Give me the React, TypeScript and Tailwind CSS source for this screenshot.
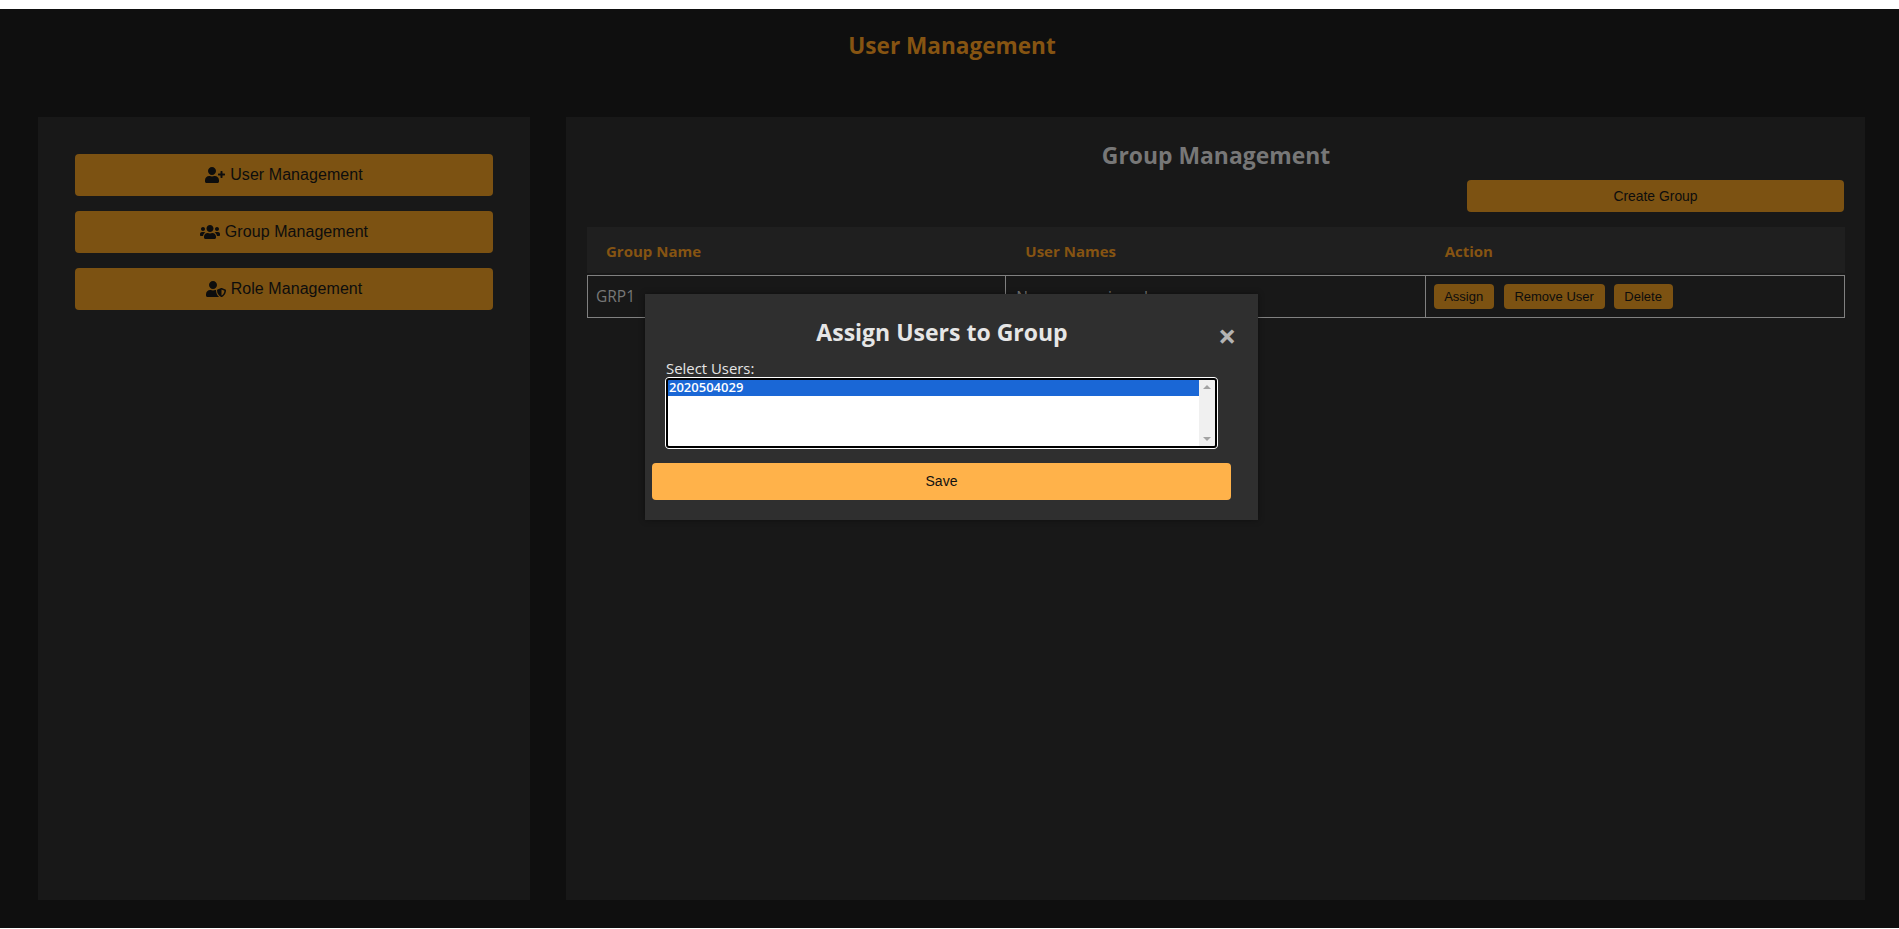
import React from 'react';
import { FaUserPlus, FaUsers, FaUserShield } from 'react-icons/fa';

const sans = "font-['Open_Sans',sans-serif]";
const arial = "font-['Liberation_Sans',Arial,sans-serif]";

const navItems = [
    { label: 'User Management', icon: <FaUserPlus size={20} /> },
    { label: 'Group Management', icon: <FaUsers size={20} /> },
    { label: 'Role Management', icon: <FaUserShield size={20} /> },
];

function SmallButton(props: { label: string; className: string }) {
    return (
        <button
            className={`h-[25px] rounded-[4px] bg-[#7c5212] text-center text-[13px] text-[#0d0d0d] ${arial} ${props.className}`}
        >
            {props.label}
        </button>
    );
}

function AssignModal() {
    return (
        <div className="absolute left-[645px] top-[294px] flex h-[226px] w-[613px] flex-col bg-[#2f2f2f] px-5 pt-[20px] shadow-[0_0_6px_rgba(0,0,0,0.4)]">
            <h2 className={`h-[38px] pr-[19px] text-center text-[23px] leading-[37px] font-bold text-[#e6e6e6] ${sans}`}>
                Assign Users to Group
            </h2>
            <span className="absolute left-[573px] top-[26px] text-[32px] leading-[32px] font-bold text-[#b3b3b3]">×</span>
            <label className={`mt-[7px] h-[18px] pl-[1px] text-[14.9px] leading-[18px] text-[#e6e6e6] ${sans}`}>Select Users:</label>
            <div role="listbox" className="flex h-[72px] w-[553px] shrink-0 rounded-[4px] border border-white bg-white outline-2 outline-offset-[-3px] outline-black">
                <div className="mx-[2px] my-[2px] flex grow bg-white">
                    <div className="grow">
                        <div className={`h-[16px] bg-[#1a67d6] pl-[1px] text-[13px] leading-[15px] font-semibold text-white ${sans}`}>2020504029</div>
                    </div>
                    <div className="flex w-[16px] flex-col items-center justify-between bg-[#f0f0f0] py-[5px]">
                        <svg width="8" height="4" viewBox="0 0 8 4"><path d="M4 0 8 4H0z" fill="#a3a3a3" /></svg>
                        <svg width="8" height="4" viewBox="0 0 8 4"><path d="M0 0h8L4 4z" fill="#a3a3a3" /></svg>
                    </div>
                </div>
            </div>
            <button className={`-ml-[13px] mt-[14px] h-[37px] w-[579px] shrink-0 rounded-[4px] bg-[#ffb24a] text-[14px] text-[#111] ${arial}`}>
                Save
            </button>
        </div>
    );
}

export default function App() {
    return (
        <div className="relative h-[929px] w-full overflow-hidden bg-white pt-[9px] pb-[1px]">
            <div className="h-[919px] bg-[#0f0f0f] pl-[38px] pr-[34px]">
                <header className="flex h-[108px] justify-center">
                    <h1 className={`mt-[19px] pl-[1px] text-[22.6px] leading-[36px] font-bold text-[#865412] ${sans}`}>User Management</h1>
                </header>
                <div className="flex h-[783px] gap-[36px]">
                    <aside className="flex w-[492px] shrink-0 flex-col gap-[15px] bg-[#181818] px-[37px] pt-[37px]">
                        {navItems.map((item) => (
                            <button
                                key={item.label}
                                className={`flex h-[42px] items-center justify-center gap-[5px] rounded-[4px] bg-[#7c5212] text-[16px] tracking-[0.06px] text-[#0d0d0d] ${arial}`}
                            >
                                {item.icon}
                                {item.label}
                            </button>
                        ))}
                    </aside>
                    <main className="w-[1299px] shrink-0 bg-[#181818] pl-[21px] pr-[20px] pt-[21px]">
                        <h2 className={`h-[36px] text-center text-[22.9px] leading-[36px] font-bold text-[#777] ${sans}`}>Group Management</h2>
                        <div className="mt-[6px] flex justify-end pr-[1px]">
                            <button className={`h-[32px] w-[377px] rounded-[4px] bg-[#7c5212] text-[13.9px] text-[#0d0d0d] ${arial}`}>Create Group</button>
                        </div>
                        <table className={`mt-[15px] w-[1258px] table-fixed border-separate border-spacing-0 text-[15.5px] ${sans}`}>
                            <thead>
                                <tr className="h-[46px] bg-[#1f1f1f] text-left text-[15px] font-bold text-[#865412]">
                                    <th className="pt-[2px] pl-[19px] font-bold">Group Name</th>
                                    <th className="pt-[2px] pl-[19px] font-bold">User Names</th>
                                    <th className="pt-[2px] pl-[19px] font-bold">Action</th>
                                </tr>
                                <tr className="h-[2px]" />
                            </thead>
                            <tbody className="text-[#777]">
                                <tr className="h-[43px]">
                                    <td className="border border-[#808080] pl-[8px]">GRP1</td>
                                    <td className="border border-l-0 border-[#808080] pl-[10px] pt-[3px]">No users assigned</td>
                                    <td className="border border-l-0 border-[#808080] pl-[8px]">
                                        <div className="flex items-center">
                                            <SmallButton label="Assign" className="w-[60px]" />
                                            <SmallButton label="Remove User" className="ml-[10px] w-[101px]" />
                                            <SmallButton label="Delete" className="ml-[9px] w-[59px]" />
                                        </div>
                                    </td>
                                </tr>
                            </tbody>
                        </table>
                    </main>
                </div>
            </div>
            <AssignModal />
        </div>
    );
}
